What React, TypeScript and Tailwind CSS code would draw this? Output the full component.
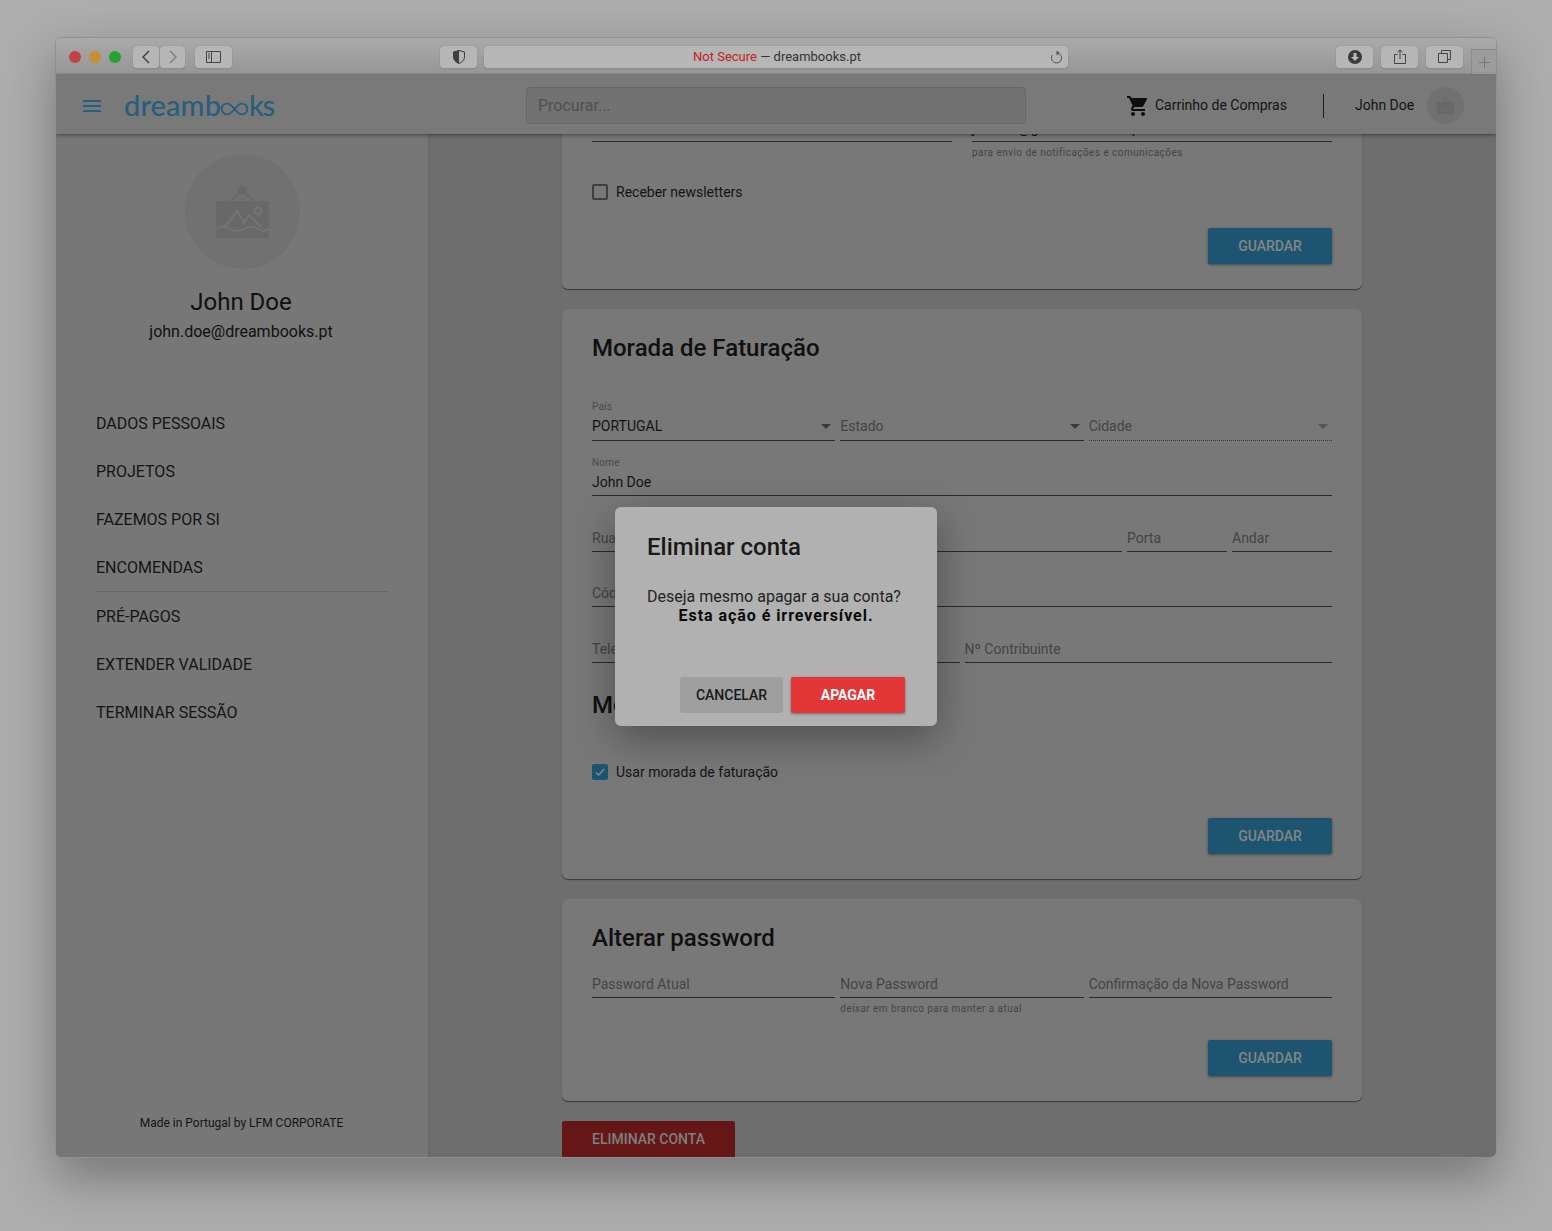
import React from "react";

function Field({ label, value, small, h = "h-[55px]", mb = "mb-[3px]", dotted, arrow, arrowLight, className = "" }: { label?: string; value?: string; small?: string; h?: string; mb?: string; dotted?: boolean; arrow?: boolean; arrowLight?: boolean; className?: string }) {
  return (
    <div className={`${h} flex flex-col justify-end ${dotted ? "border-b border-dotted border-[#3a3a3a]" : "border-b border-[#2b2b2b]"} ${className}`}>
      {small && <div className="text-[10px] leading-[12px] text-[#4a4a4a] mb-[3px] tracking-[0.2px]">{small}</div>}
      <div className={`h-[20px] ${mb} flex items-center justify-between`}>
        {value ? (
          <span className="text-[14px] text-[#141414] whitespace-nowrap">{value}</span>
        ) : (
          <span className="text-[14px] text-[#444444] whitespace-nowrap">{label}</span>
        )}
        {arrow && (
          <svg width="10" height="5" viewBox="0 0 10 5" className="mr-[4px] shrink-0">
            <path d="M0 0h10L5 5z" fill={arrowLight ? "#555555" : "#3a3a3a"} />
          </svg>
        )}
      </div>
    </div>
  );
}

function Guardar() {
  return (
    <div className="flex justify-end">
      <div className="w-[124px] h-[36px] flex items-center justify-center bg-[#1d5570] rounded-[2px] text-[14px] font-medium text-[#858585] shadow-[0_1px_3px_rgba(0,0,0,.4)]">GUARDAR</div>
    </div>
  );
}

function Check({ checked, label }: { checked?: boolean; label: string }) {
  return (
    <div className="h-[16px] flex items-center gap-[8px]">
      {checked ? (
        <div className="w-[16px] h-[16px] rounded-[2px] bg-[#1d5570] flex items-center justify-center">
          <svg width="12" height="12" viewBox="0 0 12 12" fill="none"><path d="M2 6.5 4.7 9 10 3" stroke="#858585" strokeWidth="1.5" /></svg>
        </div>
      ) : (
        <div className="w-[16px] h-[16px] rounded-[2px] border-2 border-[#3f3f3f]" />
      )}
      <span className="text-[14px] text-[#141414]">{label}</span>
    </div>
  );
}

function ChromeBtn({ className = "", children }: { className?: string; children?: React.ReactNode }) {
  return (
    <div className={`h-[23px] flex items-center justify-center rounded-[4px] bg-[#b6b6b6] border-b border-[#8e8e8e] shadow-[0_0_1px_rgba(0,0,0,.35)] ${className}`}>
      {children}
    </div>
  );
}

function FrameIcon({ size }: { size: number }) {
  return (
    <svg width={size} height={size} viewBox="0 0 115 115">
      <circle cx="57.5" cy="57.5" r="57.5" fill="#717171" />
      <circle cx="57" cy="36" r="4.5" fill="#686868" />
      <path d="M46 47 57 36 69 47" stroke="#686868" strokeWidth="2" fill="none" />
      <rect x="31" y="47" width="53" height="37" fill="#686868" />
      <path d="M40 73 52 57 60 69M58 71 64 61 76 73" stroke="#747474" strokeWidth="2" fill="none" />
      <circle cx="73" cy="57" r="3.5" stroke="#747474" strokeWidth="2" fill="none" />
      <path d="M31 75c6-3 9-3 14 0s9 3 14 0 9-3 14 0 7 2 11 0" stroke="#747474" strokeWidth="2" fill="none" />
    </svg>
  );
}

const menuA = ["DADOS PESSOAIS", "PROJETOS", "FAZEMOS POR SI", "ENCOMENDAS"];
const menuB = ["PRÉ-PAGOS", "EXTENDER VALIDADE", "TERMINAR SESSÃO"];

export default function App() {
  return (
    <div className="relative h-[1231px] overflow-hidden bg-[#adadad] pt-[37px] px-[55px] font-[Roboto,sans-serif] text-[#141414]">
      <div className="h-[1121px] rounded-[6px] overflow-hidden flex flex-col border border-[#8f8f8f] shadow-[0_20px_50px_rgba(0,0,0,.32)]">
        {/* Title bar */}
        <div className="h-[37px] shrink-0 flex items-center bg-gradient-to-b from-[#aaaaaa] to-[#969696] pl-[13px] pt-[2px] relative border-b border-[#858585]">
          <div className="flex gap-[8px]">
            <div className="w-[12px] h-[12px] rounded-full bg-[#c24343]" />
            <div className="w-[12px] h-[12px] rounded-full bg-[#c49030]" />
            <div className="w-[12px] h-[12px] rounded-full bg-[#22a332]" />
          </div>
          <ChromeBtn className="w-[26px] ml-[12px]">
            <svg width="10" height="14" viewBox="0 0 10 14" fill="none"><path d="M8 1 2 7l6 6" stroke="#3a3a3a" strokeWidth="1.4" /></svg>
          </ChromeBtn>
          <ChromeBtn className="w-[25px] ml-[1px]">
            <svg width="10" height="14" viewBox="0 0 10 14" fill="none"><path d="m2 1 6 6-6 6" stroke="#7d7d7d" strokeWidth="1.4" /></svg>
          </ChromeBtn>
          <ChromeBtn className="w-[37px] ml-[10px]">
            <svg width="15" height="12" viewBox="0 0 15 12" fill="none"><path d="M.5.5h14v11H.5zM5.500.5v11" stroke="#444444" /><path d="M2 3h2M2 5h2M2 7h2" stroke="#444444" /></svg>
          </ChromeBtn>
          <ChromeBtn className="w-[37px] ml-[208px]">
            <svg width="12" height="14" viewBox="0 0 12 14"><path d="M6 .5 11.500 2v5c0 3-2.500 5.300-5.500 6.500C3 12.300.5 10 .5 7V2z" fill="none" stroke="#3f3f3f" /><path d="M6 .5 .5 2v5c0 3 2.500 5.300 5.500 6.500z" fill="#3f3f3f" /></svg>
          </ChromeBtn>
          <ChromeBtn className="w-[584px] ml-[7px] relative pl-[2px] pt-[1px]">
            <span className="text-[13px] text-[#333333]"><span className="text-[#c4201f]">Not Secure</span> — dreambooks.pt</span>
            <svg width="13" height="14" viewBox="0 0 13 14" fill="none" className="absolute right-[5px] top-[4px]"><path d="M8 3.200A5 5 0 1 1 2.500 5" stroke="#555555" /><path d="M6.500 .5v5l3.500-2.500z" fill="#555555" /></svg>
          </ChromeBtn>
          <ChromeBtn className="w-[37px] ml-[268px]">
            <svg width="14" height="14" viewBox="0 0 14 14"><circle cx="7" cy="7" r="7" fill="#3a3a3a" /><path d="M5.500 3h3v4H11L7 11 3 7h2.500z" fill="#b9b9b9" /></svg>
          </ChromeBtn>
          <ChromeBtn className="w-[37px] ml-[8px]">
            <svg width="12" height="15" viewBox="0 0 12 15" fill="none"><path d="M3.500 5.500H.5v9h11v-9h-3M6 10V1M3.500 3.200 6 .8l2.500 2.400" stroke="#444444" /></svg>
          </ChromeBtn>
          <ChromeBtn className="w-[37px] ml-[8px]">
            <svg width="13" height="13" viewBox="0 0 13 13" fill="none"><path d="M.5 3.500h9v9h-9zM3.500 3.500v-3h9v9h-3" stroke="#444444" /></svg>
          </ChromeBtn>
          <div className="absolute right-0 bottom-0 w-[25px] h-[25px] bg-[#9c9c9c] border-l border-t border-[#8a8a8a] flex items-center justify-center">
            <svg width="11" height="11" viewBox="0 0 11 11"><path d="M5.500 0v11M0 5.500h11" stroke="#777777" /></svg>
          </div>
        </div>

        {/* App header */}
        <div className="relative z-10 h-[59px] shrink-0 flex items-center bg-[#797979] pt-[2px] shadow-[0_1px_4px_rgba(0,0,0,.45)]">
          <div className="ml-[27px] w-[18px] flex flex-col gap-[3px]">
            <div className="h-[2px] bg-[#25607f]" />
            <div className="h-[2px] bg-[#25607f]" />
            <div className="h-[2px] bg-[#25607f]" />
          </div>
          <div className="ml-[23px] w-[151px] flex items-center text-[29px] leading-[36px] font-[Lato,sans-serif] font-medium text-[#265f7d] tracking-[0.1px] -mt-[2px]">
            <span>dreamb</span>
            <svg width="29" height="14" viewBox="0 0 35 16" fill="none" className="shrink-0 mt-[8px] -ml-[1px]">
              <path d="M17.500 8C14 3.500 11.500 1.500 8.500 1.500a6.500 6.500 0 0 0 0 13c3 0 5.500-2 9-6.500s6-6.500 9-6.500a6.500 6.500 0 0 1 0 13c-3 0-5.500-2-9-6.500z" stroke="#265f7d" strokeWidth="2.300" />
            </svg>
            <span className="tracking-[-1.500px]">ks</span>
          </div>
          <div className="ml-[251px] w-[500px] h-[37px] rounded-[4px] bg-[#727272] border border-[#676767] flex items-center pl-[11px] text-[16px] text-[#505050]">Procurar...</div>
          <svg width="24" height="24" viewBox="0 0 24 24" className="ml-[100px]"><path fill="#0d0d0d" d="M7 18c-1.100 0-1.990.9-1.990 2S5.900 22 7 22s2-.9 2-2-.9-2-2-2zM1 2v2h2l3.600 7.590-1.350 2.450c-.16.280-.25.610-.25.960 0 1.100.9 2 2 2h12v-2H7.420c-.14 0-.25-.11-.25-.25l.03-.12.900-1.630h7.450c.75 0 1.410-.41 1.750-1.030l3.580-6.490c.08-.14.120-.31.120-.48 0-.55-.45-1-1-1H5.210l-.94-2H1zm16 16c-1.100 0-1.990.9-1.990 2s.89 2 1.990 2 2-.9 2-2-.9-2-2-2z" /></svg>
          <span className="ml-[5px] text-[14px] w-[136px] whitespace-nowrap">Carrinho de Compras</span>
          <div className="ml-[32px] w-px h-[24px] bg-[#1c1c1c]" />
          <span className="ml-[31px] text-[14px] w-[60px] whitespace-nowrap">John Doe</span>
          <div className="ml-[12px]"><FrameIcon size={37} /></div>
        </div>

        {/* Body */}
        <div className="flex-1 min-h-0 flex bg-[#6e6e6e]">
          <aside className="w-[374px] shrink-0 bg-[#777777] border-r-2 border-[#686868] flex flex-col items-center pt-[20px] pr-[2px]">
            <div className="ml-[3px] h-[115px]"><FrameIcon size={115} /></div>
            <div className="mt-[17px] h-[32px] leading-[32px] text-[24px] text-[#101010]">John Doe</div>
            <div className="h-[24px] leading-[24px] text-[16px] text-[#101010] mt-[2px]">john.doe@dreambooks.pt</div>
            <div className="mt-[56px] self-stretch pl-[40px] pr-[38px]">
              {menuA.map((m) => (
                <div key={m} className="h-[48px] flex items-center text-[16px]">{m}</div>
              ))}
              <div className="h-px bg-[#686868] -mt-[1px] mb-[1px]" />
              {menuB.map((m) => (
                <div key={m} className="h-[48px] flex items-center text-[16px]">{m}</div>
              ))}
            </div>
            <div className="mt-auto mb-[26px] ml-[1px] text-[12px] leading-[16px]">Made in Portugal by LFM CORPORATE</div>
          </aside>

          <main className="flex-1 min-w-0 overflow-hidden pl-[132px]">
            <div className="w-[800px] -mt-[36px] flex flex-col">
              {/* Card 1 */}
              <section className="bg-[#787878] rounded-[6px] shadow-[0_1px_1px_rgba(0,0,0,.5)] px-[30px] pb-[25px]">
                <div className="grid grid-cols-2 gap-x-[20px]">
                  <Field value="John Doe" h="h-[44px]" />
                  <Field value="jon.doe@gmail.dreamshop" h="h-[44px]" />
                  <div />
                  <div className="text-[10px] leading-[12px] text-[#444444] mt-[5px] tracking-[0.45px] h-[12px] whitespace-nowrap">para envio de notificações e comunicações</div>
                </div>
                <div className="mt-[25px]"><Check label="Receber newsletters" /></div>
                <div className="mt-[28px]"><Guardar /></div>
              </section>

              {/* Card 2 */}
              <section className="mt-[20px] bg-[#787878] rounded-[6px] shadow-[0_1px_1px_rgba(0,0,0,.5)] px-[30px] pt-[22px] pb-[25px]">
                <h2 className="h-[34px] leading-[34px] text-[24px] font-medium text-[#101010]">Morada de Faturação</h2>
                <div className="mt-[20px] grid grid-cols-3 gap-x-[5px]">
                  <Field small="País" value="PORTUGAL" h="h-[56px]" mb="mb-[4px]" arrow />
                  <Field label="Estado" h="h-[56px]" mb="mb-[4px]" arrow />
                  <Field label="Cidade" h="h-[56px]" mb="mb-[4px]" arrow arrowLight dotted />
                </div>
                <Field small="Nome" value="John Doe" />
                <div className="flex gap-[5px]">
                  <Field label="Rua" h="h-[56px]" className="flex-1" />
                  <Field label="Porta" h="h-[56px]" className="w-[100px]" />
                  <Field label="Andar" h="h-[56px]" className="w-[100px]" />
                </div>
                <Field label="Código Postal" />
                <div className="grid grid-cols-2 gap-x-[5px]">
                  <Field label="Telefone" h="h-[56px]" />
                  <Field label="Nº Contribuinte" h="h-[56px]" />
                </div>
                <h2 className="mt-[25px] h-[34px] leading-[34px] text-[24px] font-medium text-[#101010]">Morada de Entrega</h2>
                <div className="mt-[42px]"><Check checked label="Usar morada de faturação" /></div>
                <div className="mt-[38px]"><Guardar /></div>
              </section>

              {/* Card 3 */}
              <section className="mt-[20px] bg-[#787878] rounded-[6px] shadow-[0_1px_1px_rgba(0,0,0,.5)] px-[30px] pt-[22px] pb-[25px]">
                <h2 className="h-[34px] leading-[34px] text-[24px] font-medium text-[#101010]">Alterar password</h2>
                <div className="grid grid-cols-3 gap-x-[5px]">
                  <Field label="Password Atual" h="h-[43px]" />
                  <Field label="Nova Password" h="h-[43px]" />
                  <Field label="Confirmação da Nova Password" h="h-[43px]" />
                  <div />
                  <div className="text-[10px] leading-[12px] text-[#444444] mt-[5px] tracking-[0.44px] h-[12px] whitespace-nowrap">deixar em branco para manter a atual</div>
                </div>
                <div className="mt-[25px]"><Guardar /></div>
              </section>

              <div className="mt-[20px] w-[173px] h-[37px] flex items-center justify-center bg-[#651717] rounded-[2px] text-[14px] font-medium text-[#7f7f7f]">ELIMINAR CONTA</div>
            </div>
          </main>
        </div>
      </div>

      {/* Dialog */}
      <div className="absolute left-[615px] top-[507px] w-[322px] h-[219px] rounded-[6px] bg-[#b1b1b1] shadow-[0_12px_40px_rgba(0,0,0,.35)] px-[32px] pt-[23px]">
        <div className="h-[34px] leading-[34px] text-[24px] font-medium text-[#191919]">Eliminar conta</div>
        <div className="mt-[23px] -mx-[12px] text-center text-[16px] leading-[19px] text-[#222222]">
          <span className="inline-block mr-[4px]">Deseja mesmo apagar a sua conta?</span>
          <br />
          <b className="font-bold text-[#0a0a0a] tracking-[0.95px]">Esta ação é irreversível.</b>
        </div>
        <div className="absolute right-[32px] bottom-[13px] flex gap-[8px]">
          <div className="w-[103px] h-[36px] rounded-[3px] bg-[#9f9f9f] flex items-center justify-center text-[14px] font-medium text-[#191919]">CANCELAR</div>
          <div className="w-[114px] h-[36px] rounded-[2px] bg-[#e33737] flex items-center justify-center text-[14px] font-bold text-white shadow-[0_1px_3px_rgba(0,0,0,.4)]">APAGAR</div>
        </div>
      </div>
    </div>
  );
}
